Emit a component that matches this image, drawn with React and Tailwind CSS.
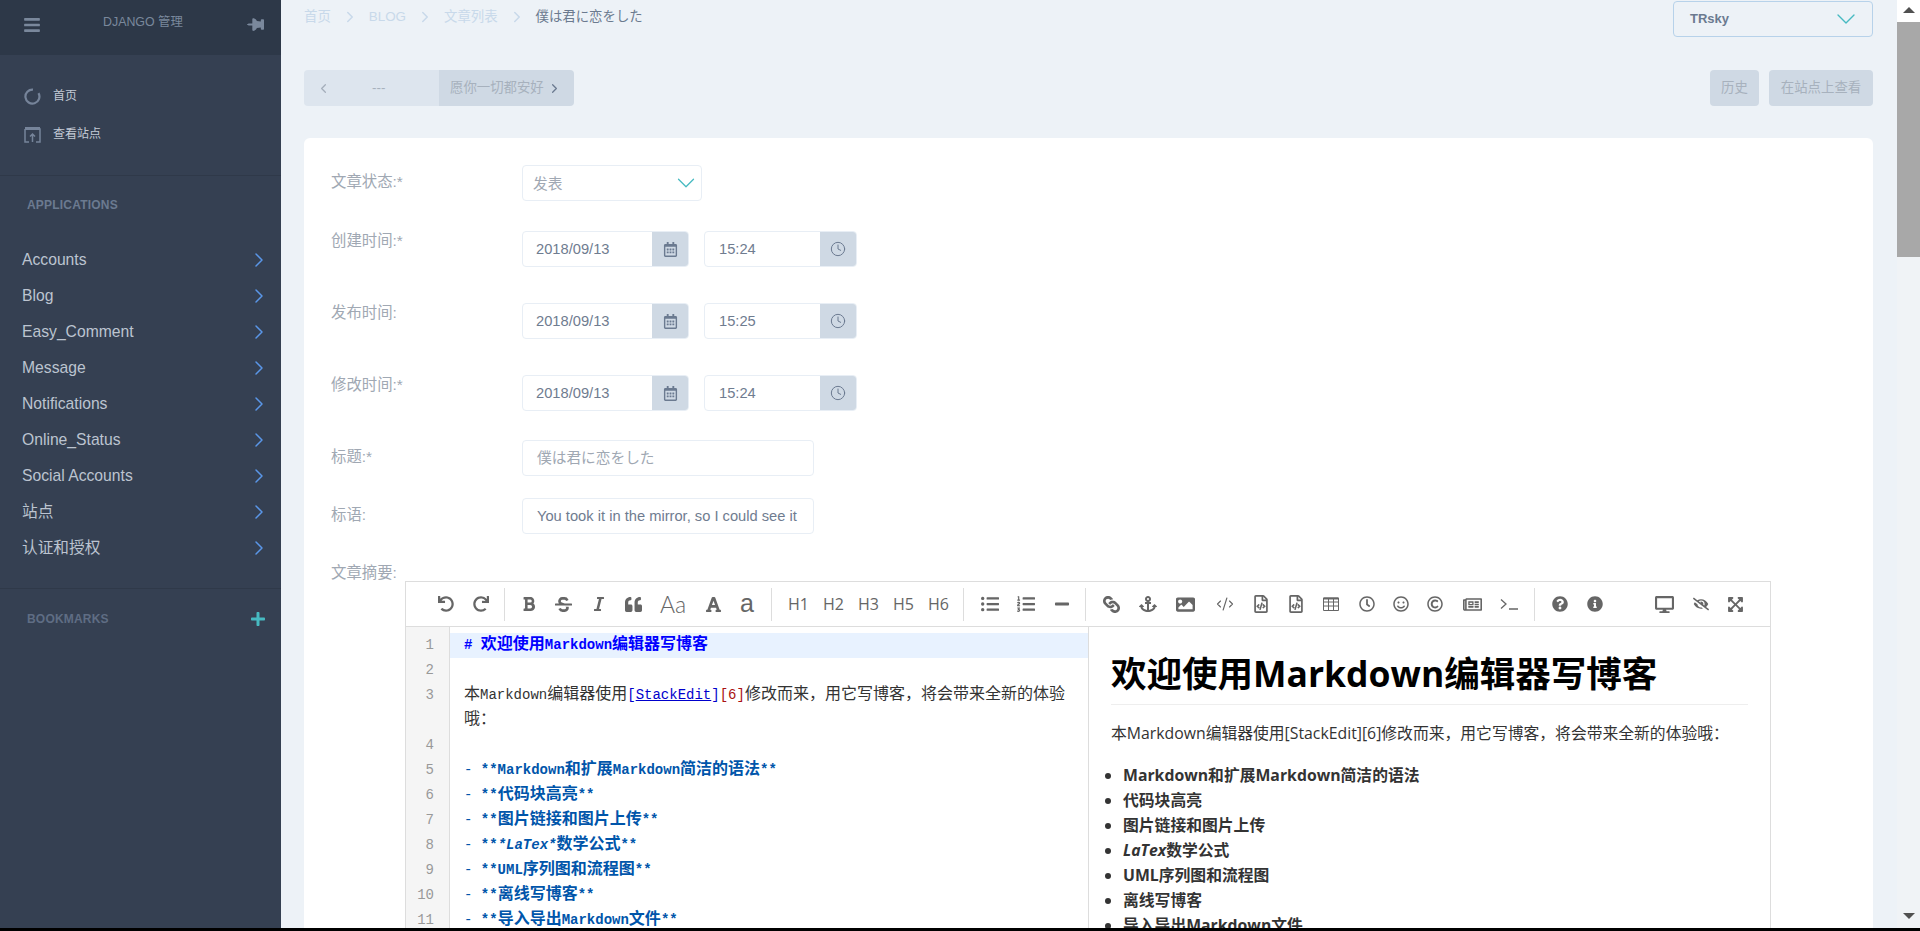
import {
  FaUndo, FaRedo, FaBold, FaStrikethrough, FaItalic, FaQuoteLeft, FaFont, FaListUl, FaListOl, FaMinus,
  FaLink, FaAnchor, FaImage, FaRegFileCode, FaRegClock, FaRegSmile, FaRegCopyright,
  FaRegNewspaper, FaQuestionCircle, FaInfoCircle, FaDesktop, FaEyeSlash, FaExpandArrowsAlt, FaThumbtack,
  FaBars, FaPlus, FaRegCalendarAlt,
} from 'react-icons/fa';
import { ChevronRight, ChevronLeft, ChevronDown, Clock, CodeXml } from 'lucide-react';

const ui = 'font-["Liberation_Sans","Noto_Sans_CJK_SC",sans-serif]';
const menu = ['Accounts', 'Blog', 'Easy_Comment', 'Message', 'Notifications', 'Online_Status', 'Social Accounts', '站点', '认证和授权'];

const heading = "text-[16px] font-medium font-['Open_Sans']";
const thin = "font-['Lato'] font-light";

const TableIcon = () => (
  <svg width="16" height="14" viewBox="0 0 16 14" fill="none" stroke="currentColor" strokeWidth="1">
    <path d="M.5 1h15v12.5H.5zM.5 5h15M.5 9h15M5.5 2v11.5M10.5 2v11.5" />
    <path d="M.5 1.5h15" strokeWidth="2" />
  </svg>
);

const TerminalIcon = () => (
  <svg width="18" height="12" viewBox="0 0 18 12" fill="none" stroke="currentColor" strokeWidth="1.3">
    <path d="M1 1.5 6 6l-5 4.5M9 11h9" />
  </svg>
);

const tools = [
  { icon: FaUndo, w: 'w-[35px]', size: 16 },
  { icon: FaRedo, w: 'w-[35px]', size: 16 },
  { sep: 'ml-[6px] mr-[6px]' },
  { icon: FaBold, w: 'w-[35px]', size: 16 },
  { icon: FaStrikethrough, w: 'w-[35px]', size: 17 },
  { icon: FaItalic, w: 'w-[35px]', size: 16 },
  { icon: FaQuoteLeft, w: 'w-[35px]', size: 17 },
  { text: 'Aa', w: 'w-[44px]', cls: `text-[23px] ${thin}` },
  { icon: FaFont, w: 'w-[37px]', size: 17 },
  { text: 'a', w: 'w-[30px]', cls: 'text-[25px]' },
  { sep: 'ml-[9px] mr-[9px]' },
  { text: 'H1', w: 'w-[35px]', cls: heading },
  { text: 'H2', w: 'w-[35px]', cls: heading },
  { text: 'H3', w: 'w-[35px]', cls: heading },
  { text: 'H5', w: 'w-[35px]', cls: heading },
  { text: 'H6', w: 'w-[35px]', cls: heading },
  { sep: 'ml-[7px] mr-[8px]' },
  { icon: FaListUl, w: 'w-[36px]', size: 18 },
  { icon: FaListOl, w: 'w-[36px]', size: 18 },
  { icon: FaMinus, w: 'w-[35px]', size: 16 },
  { sep: 'ml-[6px] mr-[8px]' },
  { icon: FaLink, w: 'w-[35px]', size: 17, cls: 'rotate-90' },
  { icon: FaAnchor, w: 'w-[37px]', size: 18 },
  { icon: FaImage, w: 'w-[39px]', size: 19 },
  { icon: CodeXml, w: 'w-[39px]', size: 18, stroke: 1.5 },
  { icon: FaRegFileCode, w: 'w-[34px]', size: 18 },
  { icon: FaRegFileCode, w: 'w-[35px]', size: 18 },
  { node: <TableIcon />, w: 'w-[36px]' },
  { icon: FaRegClock, w: 'w-[35px]', size: 16 },
  { icon: FaRegSmile, w: 'w-[33px]', size: 16 },
  { icon: FaRegCopyright, w: 'w-[36px]', size: 16 },
  { icon: FaRegNewspaper, w: 'w-[38px]', size: 19 },
  { node: <TerminalIcon />, w: 'w-[36px]' },
  { sep: 'ml-[7px] mr-[7px]' },
  { icon: FaQuestionCircle, w: 'w-[35px]', size: 16 },
  { icon: FaInfoCircle, w: 'w-[35px]', size: 16 },
];

const gutter = [1, 2, 3, '', 4, 5, 6, 7, 8, 9, 10, 11];

const listLines = [
  '**Markdown和扩展Markdown简洁的语法**',
  '**代码块高亮**',
  '**图片链接和图片上传**',
  null,
  '**UML序列图和流程图**',
  '**离线写博客**',
  '**导入导出Markdown文件**',
];

const previewList = ['Markdown和扩展Markdown简洁的语法', '代码块高亮', '图片链接和图片上传', null, 'UML序列图和流程图', '离线写博客', '导入导出Markdown文件'];

// latin glyphs stay at 14px, cjk runs are larger like in the original
function Mono({ text }) {
  return text.split(/([\u3000-\u9fff\uff00-\uffef]+)/).map((part, i) =>
    i % 2 ? <span key={i} className="text-[16px]">{part}</span> : part
  );
}

function DateRow({ date, time }) {
  return (
    <div className="flex gap-[15px]">
      <div className="flex h-9 w-[167px] rounded border border-[#e8eef5] overflow-hidden">
        <div className="flex-1 pl-[13px] leading-[34px] text-[14.7px] text-[#6f7c90]">{date}</div>
        <div className="w-9 bg-[#cfd9e4] flex items-center justify-center text-[#6b7a90]">
          <FaRegCalendarAlt size={15} />
        </div>
      </div>
      <div className="flex h-9 w-[153px] rounded border border-[#e8eef5] overflow-hidden">
        <div className="flex-1 pl-[14px] leading-[34px] text-[14.7px] text-[#6f7c90]">{time}</div>
        <div className="w-9 bg-[#cfd9e4] flex items-center justify-center text-[#6b7a90]">
          <Clock size={16} strokeWidth={1.5} />
        </div>
      </div>
    </div>
  );
}

function Field({ label, className = '', labelClass = 'pt-px', children }) {
  return (
    <div className={`flex ${className}`}>
      <div className={`w-[191px] text-[15.4px] leading-[18px] text-[#a0a8b3] ${labelClass}`}>{label}</div>
      {children}
    </div>
  );
}

export default function App() {
  return (
    <div className={`flex flex-col h-[931px] overflow-hidden ${ui}`}>
      <div className="flex h-[928px] overflow-hidden bg-[#edf2f7]">
        <aside className="w-[281px] shrink-0 bg-[#354052]">
          <div className="flex h-[55px] bg-[#2d3848] text-[#7a889c]">
            <FaBars size={18} className="ml-[23px] mt-4" />
            <div className="ml-[62px] mt-[15px] text-[12.4px] leading-[14px]">DJANGO 管理</div>
            <FaThumbtack size={17} className="ml-[64px] mt-4 rotate-90" />
          </div>
          <div className="h-[121px] border-b border-[#2f3949] pt-[31px] text-[12px] text-[#c3cad5]">
            <div className="flex items-center h-5 pl-6">
              <svg width="17" height="17" viewBox="0 0 17 17" fill="none" stroke="#76849a" strokeWidth="2.2"><path d="M9 1.6a7 7 0 1 0 5.5 3.5" /></svg>
              <span className="ml-3">首页</span>
            </div>
            <div className="flex items-center h-5 pl-6 mt-[18px]">
              <svg width="17" height="17" viewBox="0 0 17 17" fill="none" stroke="#76849a" strokeWidth="1.5"><path d="M1 3h15v13h-4M5 16H1V3" /><path d="M1 2.5h15" strokeWidth="3" /><path d="M8.5 16V8M6 10.5l2.5-2.5 2.5 2.5" /></svg>
              <span className="ml-3">查看站点</span>
            </div>
          </div>
          <div className="pl-[27px] pt-[21px] text-[12px] leading-4 font-bold tracking-[0.2px] text-[#6b7a90]">APPLICATIONS</div>
          <nav className="mt-[29px] h-[347px] border-b border-[#2f3949]">
            {menu.map((item) => (
              <div key={item} className="flex items-center justify-between h-9 pl-[22px] pr-[10px] text-[15.7px] text-[#bcc4d0]">
                {item}
                <ChevronRight size={24} strokeWidth={1.5} className="text-[#5a96e8]" />
              </div>
            ))}
          </nav>
          <div className="flex items-center justify-between pl-[27px] pr-[15px] pt-[22px] text-[12px] leading-4 font-bold tracking-[0.2px] text-[#5f6d84]">
            BOOKMARKS
            <FaPlus size={16} className="text-[#47bac1]" />
          </div>
        </aside>

        <main className="flex-1 min-w-0 pl-[23px] pr-[24px]">
          <div className="flex justify-between h-[70px]">
            <div className="flex items-center h-[34px] text-[13.4px] text-[#c8d9ea]">
              <span>首页</span>
              <ChevronRight size={18} strokeWidth={2} className="mx-[10px]" />
              <span>BLOG</span>
              <ChevronRight size={18} strokeWidth={2} className="mx-[10px]" />
              <span>文章列表</span>
              <ChevronRight size={18} strokeWidth={2} className="mx-[10px]" />
              <span className="text-[#6b7a8f]">僕は君に恋をした</span>
            </div>
            <div className="flex items-center justify-between w-[200px] h-9 mt-px pl-[16px] pr-[10px] border border-[#b7d2ea] rounded text-[13px] font-bold text-[#6b7a90]">
              TRsky
              <ChevronDown size={32} strokeWidth={1} className="text-[#47bac1]" />
            </div>
          </div>

          <div className="flex justify-between h-[68px] text-[13.4px] text-[#a7b1bd]">
            <div className="flex h-9 w-[270px] rounded overflow-hidden">
              <div className="flex items-center w-[135px] pl-[12px] bg-[#dde5ee]">
                <ChevronLeft size={15} strokeWidth={2} className="text-[#a4aebb]" />
                <span className="ml-[41px]">---</span>
              </div>
              <div className="flex items-center w-[135px] pl-[11px] bg-[#cfd9e4] whitespace-nowrap">
                愿你一切都安好
                <ChevronRight size={15} strokeWidth={2} className="text-[#6b7a90] ml-[3px]" />
              </div>
            </div>
            <div className="flex gap-[10px]">
              <div className="flex items-center justify-center w-[49px] h-9 rounded bg-[#cfd9e4]">历史</div>
              <div className="flex items-center justify-center w-[104px] h-9 rounded bg-[#cfd9e4]">在站点上查看</div>
            </div>
          </div>

          <div className="h-[800px] rounded-md bg-white pt-[27px] pl-[27px]">
            <Field label="文章状态:*" labelClass="pt-[8px]">
              <div className="flex items-center justify-between w-[180px] h-9 pl-[10px] rounded border border-[#e8eef5] text-[14.7px] text-[#a0a8b3]">
                <span className="pt-[3px]">发表</span>
                <ChevronDown size={30} strokeWidth={1} className="text-[#47bac1]" />
              </div>
            </Field>
            <Field label="创建时间:*" className="mt-[30px]"><DateRow date="2018/09/13" time="15:24" /></Field>
            <Field label="发布时间:" className="mt-9"><DateRow date="2018/09/13" time="15:25" /></Field>
            <Field label="修改时间:*" className="mt-9"><DateRow date="2018/09/13" time="15:24" /></Field>
            <Field label="标题:*" className="mt-[29px]" labelClass="pt-[8px]">
              <div className="w-[292px] h-9 pl-[14px] leading-[34px] rounded border border-[#e8eef5] text-[14.7px] text-[#a0a8b3]">僕は君に恋をした</div>
            </Field>
            <Field label="标语:" className="mt-[22px]" labelClass="pt-[8px]">
              <div className="w-[292px] h-9 pl-[14px] leading-[34px] rounded border border-[#e8eef5] text-[14.7px] text-[#6f7c90] whitespace-nowrap">You took it in the mirror, so I could see it</div>
            </Field>
            <div className="mt-[30px] text-[15.4px] leading-[18px] text-[#a0a8b3]">文章摘要:</div>

            <div className="ml-[74px] -mt-px w-[1366px] h-[400px] border border-[#dddddd]">
              <div className="flex items-center h-[45px] pl-[22px] pr-[18px] border-b border-[#dddddd] text-[#666666]">
                {tools.map((t, i) => {
                  if (t.sep) return <span key={i} className={`w-px h-[33px] shrink-0 bg-[#dddddd] ${t.sep}`} />;
                  const Icon = t.icon;
                  return (
                    <span key={i} className={`flex items-center justify-center shrink-0 ${t.w} ${t.cls || ''}`}>
                      {t.node || (Icon ? <Icon size={t.size} strokeWidth={t.stroke} /> : t.text)}
                    </span>
                  );
                })}
                <span className="flex items-center justify-center w-[38px] ml-auto"><FaDesktop size={19} /></span>
                <span className="flex items-center justify-center w-[36px]"><FaEyeSlash size={16} /></span>
                <span className="flex items-center justify-center w-[33px]"><FaExpandArrowsAlt size={17} /></span>
              </div>
              <div className="flex h-[354px]">
                <div className="w-[683px] shrink-0 flex border-r border-[#dddddd] font-['Liberation_Mono','Noto_Sans_CJK_SC',monospace] text-[14px] leading-[25px]">
                  <div className="w-[44px] shrink-0 pt-[6px] pr-[15px] text-right text-[#999999] bg-[#f5f5f5] border-r border-[#dddddd]">
                    {gutter.map((n, i) => <div key={i} className="h-[25px]">{n}</div>)}
                  </div>
                  <div className="flex-1 min-w-0 pt-[6px] whitespace-nowrap text-[#333333]">
                    <div className="h-[25px] pl-[14px] bg-[#e8f2ff] font-bold text-[#0000ff]"><Mono text="# 欢迎使用Markdown编辑器写博客" /></div>
                    <div className="h-[25px]" />
                    <div className="h-[25px] pl-[14px]">
                      <Mono text="本Markdown编辑器使用" />
                      <span className="text-[#0000cc]">[<span className="underline">StackEdit</span>]</span>
                      <span className="text-[#aa1111]">[6]</span>
                      <Mono text={'修改而来\uff0c用它写博客\uff0c将会带来全新的体验'} />
                    </div>
                    <div className="h-[25px] pl-[14px]"><Mono text={'哦\uff1a'} /></div>
                    <div className="h-[25px]" />
                    {listLines.map((line, i) => (
                      <div key={i} className="h-[25px] pl-[14px] font-bold text-[#0055aa]">
                        <span className="font-normal">- </span>
                        {line ? <Mono text={line} /> : <>**<i>*LaTex*</i><Mono text="数学公式" />**</>}
                      </div>
                    ))}
                  </div>
                </div>
                <div className="flex-1 min-w-0 px-[22px] font-['Open_Sans','Noto_Sans_CJK_SC',sans-serif] text-[15.8px] leading-[25px] text-[#333333]">
                  <h1 className="pt-[21px] pb-[6px] border-b border-[#eeeeee] text-[35.5px] leading-[50px] font-bold text-black whitespace-nowrap">欢迎使用Markdown编辑器写博客</h1>
                  <p className="mt-[16px] whitespace-nowrap">{'本Markdown编辑器使用[StackEdit][6]修改而来\uff0c用它写博客\uff0c将会带来全新的体验哦\uff1a'}</p>
                  <ul className="mt-[17px] pl-3 list-disc font-bold">
                    {previewList.map((item, i) => (
                      <li key={i}>{item || <><i>LaTex</i>数学公式</>}</li>
                    ))}
                  </ul>
                </div>
              </div>
            </div>
          </div>
        </main>

        <div className="flex flex-col justify-between w-[23px] shrink-0 bg-[#f0f3f6]">
          <div>
            <div className="flex justify-center pt-[7px] h-[22px] bg-white">
              <span className="w-0 h-0 border-x-[6px] border-x-transparent border-b-[6px] border-b-[#505050]" />
            </div>
            <div className="h-[235px] bg-[#a8a8a8]" />
          </div>
          <div className="flex justify-center h-[22px] pt-[7px]">
            <span className="w-0 h-0 border-x-[6px] border-x-transparent border-t-[6px] border-t-[#505050]" />
          </div>
        </div>
      </div>
      <div className="h-[3px] bg-black" />
    </div>
  );
}
